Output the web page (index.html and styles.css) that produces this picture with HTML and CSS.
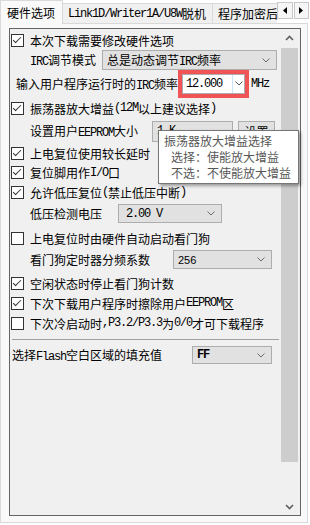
FILE: index.html
```html
<!DOCTYPE html>
<html lang="zh-CN">
<head>
    <meta charset="UTF-8">
    <meta name="viewport" content="width=device-width, initial-scale=1.0">
    <title>硬件选项</title>
    <link rel="stylesheet" href="styles.css">
</head>
<body>
    <div class="tabs">
        <div class="tab active">硬件选项</div>
        <div class="tab tab-link"><span class="en">Link1D/Writer1A/U8W</span>脱机</div>
        <div class="tab tab-clip">程序加密后</div>
        <div class="tab-arrows">
            <div class="arrow-btn">
                <svg width="4" height="7" viewBox="0 0 4 7"><polygon points="4,0 0,3.5 4,7" fill="#000"/></svg>
            </div>
            <div class="arrow-btn">
                <svg width="4" height="7" viewBox="0 0 4 7"><polygon points="0,0 4,3.5 0,7" fill="#000"/></svg>
            </div>
        </div>
    </div>

    <div class="panel">
        <div class="box">
            <div class="options">
                <div class="row"><span class="cb on"></span>本次下载需要修改硬件选项</div>

                <div class="row indent">
                    <span class="lbl lbl-irc"><span class="en">IRC</span>调节模式</span>
                    <div class="select sel-irc"><span>总是动态调节<span class="en">IRC</span>频率</span><svg class="chev" width="8" height="5" viewBox="0 0 8 5"><polyline points="0.5,0.5 4,4 7.5,0.5" fill="none" stroke="#6d6d6d"/></svg></div>
                </div>

                <div class="row freq">
                    <span>输入用户程序运行时的<span class="en">IRC</span>频率</span>
                    <div class="hl">
                        <div class="combo">
                            <span class="en combo-text">12.000</span>
                            <span class="combo-drop"><svg width="8" height="5" viewBox="0 0 8 5"><polyline points="0.5,0.5 4,4 7.5,0.5" fill="none" stroke="#555"/></svg></span>
                        </div>
                    </div>
                    <span class="en unit">MHz</span>
                </div>

                <div class="row mt1"><span class="cb on"></span>振荡器放大增益<span class="en">(12M</span>以上建议选择<span class="en">)</span></div>

                <div class="row indent eeprom">
                    <span class="lbl lbl-eeprom">设置用户<span class="en">EEPROM</span>大小</span>
                    <div class="select sel-eeprom"><span class="en">1 K</span></div>
                    <div class="btn">设置</div>
                </div>

                <div class="row mt1"><span class="cb on"></span>上电复位使用较长延时</div>
                <div class="row h19"><span class="cb on"></span>复位脚用作<span class="en">I/O</span>口</div>
                <div class="row"><span class="cb on"></span>允许低压复位<span class="en">(</span>禁止低压中断<span class="en">)</span></div>

                <div class="row indent mt1 h21">
                    <span class="lbl lbl-volt">低压检测电压</span>
                    <div class="select sel-volt"><span class="en">2.00 V</span><svg class="chev" width="8" height="5" viewBox="0 0 8 5"><polyline points="0.5,0.5 4,4 7.5,0.5" fill="none" stroke="#6d6d6d"/></svg></div>
                </div>

                <div class="row mt4"><span class="cb"></span>上电复位时由硬件自动启动看门狗</div>

                <div class="row indent mt1 h21">
                    <span class="lbl lbl-wdt">看门狗定时器分频系数</span>
                    <div class="select sel-wdt"><span class="num">256</span><svg class="chev" width="8" height="5" viewBox="0 0 8 5"><polyline points="0.5,0.5 4,4 7.5,0.5" fill="none" stroke="#6d6d6d"/></svg></div>
                </div>

                <div class="row mt4 h19"><span class="cb on"></span>空闲状态时停止看门狗计数</div>
                <div class="row"><span class="cb on"></span>下次下载用户程序时擦除用户<span class="en">EEPROM</span>区</div>
                <div class="row"><span class="cb"></span>下次冷启动时<span class="en">,P3.2/P3.3</span>为<span class="en">0/0</span>才可下载程序</div>

                <div class="sep"></div>

                <div class="row fill">
                    <span class="lbl lbl-fill">选择<span class="en">Flash</span>空白区域的填充值</span>
                    <div class="select sel-fill"><span class="en bold">FF</span><svg class="chev" width="8" height="5" viewBox="0 0 8 5"><polyline points="0.5,0.5 4,4 7.5,0.5" fill="none" stroke="#6d6d6d"/></svg></div>
                </div>
            </div>

            <div class="scrollbar">
                <div class="sb-btn">
                    <svg width="9" height="6" viewBox="0 0 9 6"><polyline points="1,5 4.5,1.5 8,5" fill="none" stroke="#606060" stroke-width="1.6"/></svg>
                </div>
                <div class="sb-thumb"></div>
                <div class="sb-space"></div>
                <div class="sb-btn">
                    <svg width="9" height="6" viewBox="0 0 9 6"><polyline points="1,1 4.5,4.5 8,1" fill="none" stroke="#606060" stroke-width="1.6"/></svg>
                </div>
            </div>
        </div>

        <div class="tooltip">
            <div>振荡器放大增益选择</div>
            <div class="tip-line">选择：使能放大增益</div>
            <div class="tip-line">不选：不使能放大增益</div>
        </div>
    </div>
</body>
</html>
```

FILE: styles.css
```css
* {
    box-sizing: border-box;
}

body {
    margin: 0;
    width: 310px;
    height: 525px;
    overflow: hidden;
    font-family: "Noto Sans CJK SC", sans-serif;
    font-size: 12px;
    color: #000;
    background-color: #fff;
}

.en {
    font-family: "Liberation Mono", monospace;
    font-size: 12px;
    letter-spacing: -1.2px;
}

.bold {
    font-weight: bold;
}

.num {
    font-family: "Liberation Sans", sans-serif;
    font-size: 11px;
}

/* tab strip */
.tabs {
    display: flex;
    height: 23px;
    position: relative;
    z-index: 1;
}

.tab {
    height: 20px;
    margin-top: 3px;
    padding-left: 5px;
    display: flex;
    align-items: center;
    white-space: nowrap;
    background-color: #f0f0f0;
    border-top: 1px solid #d9d9d9;
    border-right: 1px solid #d9d9d9;
}

.tab.active {
    width: 63px;
    height: 24px;
    margin-top: 0;
    padding-left: 6px;
    background-color: #f9f9f9;
    border-left: 1px solid #d9d9d9;
}

.tab-link {
    width: 150px;
}

.tab-clip {
    flex: 1;
    overflow: hidden;
    border-right: none;
}

.tab-arrows {
    display: flex;
    padding-top: 2px;
    width: 33px;
}

.arrow-btn {
    width: 16px;
    height: 17px;
    margin-right: 1px;
    display: flex;
    align-items: center;
    justify-content: center;
    background-color: #f6f6f6;
    border: 1px solid #c8c8c8;
}

/* page */
.panel {
    position: relative;
    width: 308px;
    height: 500px;
    background-color: #f9f9f9;
    border: 1px solid #d9d9d9;
}

.box {
    display: flex;
    width: 292px;
    height: 488px;
    margin: 4px 0 0 8px;
    background-color: #f0f0f0;
    border: 1px solid #646464;
}

.options {
    flex: 1;
    display: flex;
    flex-direction: column;
    padding-top: 1px;
}

.row {
    display: flex;
    align-items: center;
    height: 20px;
    white-space: nowrap;
}

.row.indent {
    padding-left: 20px;
}

.mt1 { margin-top: 1px; }
.mt4 { margin-top: 4px; }
.h19 { height: 19px; }
.h21 { height: 21px; }

.cb {
    position: relative;
    flex: none;
    width: 13px;
    height: 13px;
    margin: 0 6px 0 1px;
    background-color: #fff;
    border: 1px solid #333;
}

.cb.on::after {
    content: "";
    position: absolute;
    left: 3px;
    top: 0;
    width: 3px;
    height: 7px;
    border: solid #333;
    border-width: 0 1.5px 1.5px 0;
    transform: rotate(45deg);
}

.lbl {
    flex: none;
}

.lbl-irc { width: 72px; }
.lbl-eeprom { width: 122px; }
.lbl-volt { width: 88px; }
.lbl-wdt { width: 143px; }
.lbl-fill { width: 180px; }

.select {
    display: flex;
    align-items: center;
    justify-content: space-between;
    height: 20px;
    padding: 0 6px 0 4px;
    background-color: #e1e1e1;
    border: 1px solid #adadad;
}

.sel-irc { width: 175px; }
.sel-volt { width: 104px; height: 19px; padding-left: 7px; }
.sel-wdt { width: 99px; height: 19px; }
.sel-fill { width: 80px; height: 18px; }

.row.eeprom {
    height: 22px;
    margin-top: 2px;
}

.sel-eeprom {
    width: 81px;
    height: 21px;
}

.btn {
    width: 37px;
    height: 21px;
    margin-left: 5px;
    text-align: center;
    line-height: 19px;
    background-color: #e1e1e1;
    border: 1px solid #adadad;
}

/* frequency row with the red highlight */
.row.freq {
    height: 27px;
    padding-left: 6px;
}

.hl {
    display: flex;
    border: 4px solid #f05454;
}

.combo {
    display: flex;
    align-items: center;
    justify-content: space-between;
    width: 63px;
    height: 20px;
    background-color: #fff;
    border: 1px solid #abadb3;
}

.combo-text {
    padding-left: 3px;
}

.combo-drop {
    display: flex;
    align-items: center;
    justify-content: center;
    width: 12px;
    height: 100%;
    border-left: 1px solid #cce4f7;
}

.unit {
    margin-left: 2px;
}

.sep {
    height: 1px;
    margin: 6px 2px 0 2px;
    background-color: #a0a0a0;
}

.row.fill {
    margin-top: 5px;
    padding-left: 2px;
}

/* scroll bar */
.scrollbar {
    display: flex;
    flex-direction: column;
    width: 17px;
    margin-right: 2px;
    background-color: #f0f0f0;
}

.sb-btn {
    height: 17px;
    display: flex;
    align-items: center;
    justify-content: center;
}

.sb-thumb {
    height: 414px;
    margin-top: 2px;
    background-color: #cdcdcd;
}

.sb-space {
    flex: 1;
}

/* tooltip over the eeprom row */
.tooltip {
    position: absolute;
    left: 157px;
    top: 106px;
    width: 141px;
    height: 54px;
    padding: 2px 0 0 5px;
    line-height: 16px;
    color: #575757;
    background-color: #fff;
    border: 1px solid #767676;
    box-shadow: 2px 2px 3px rgba(0, 0, 0, 0.35);
    z-index: 2;
}

.tip-line {
    padding-left: 7px;
}
```
